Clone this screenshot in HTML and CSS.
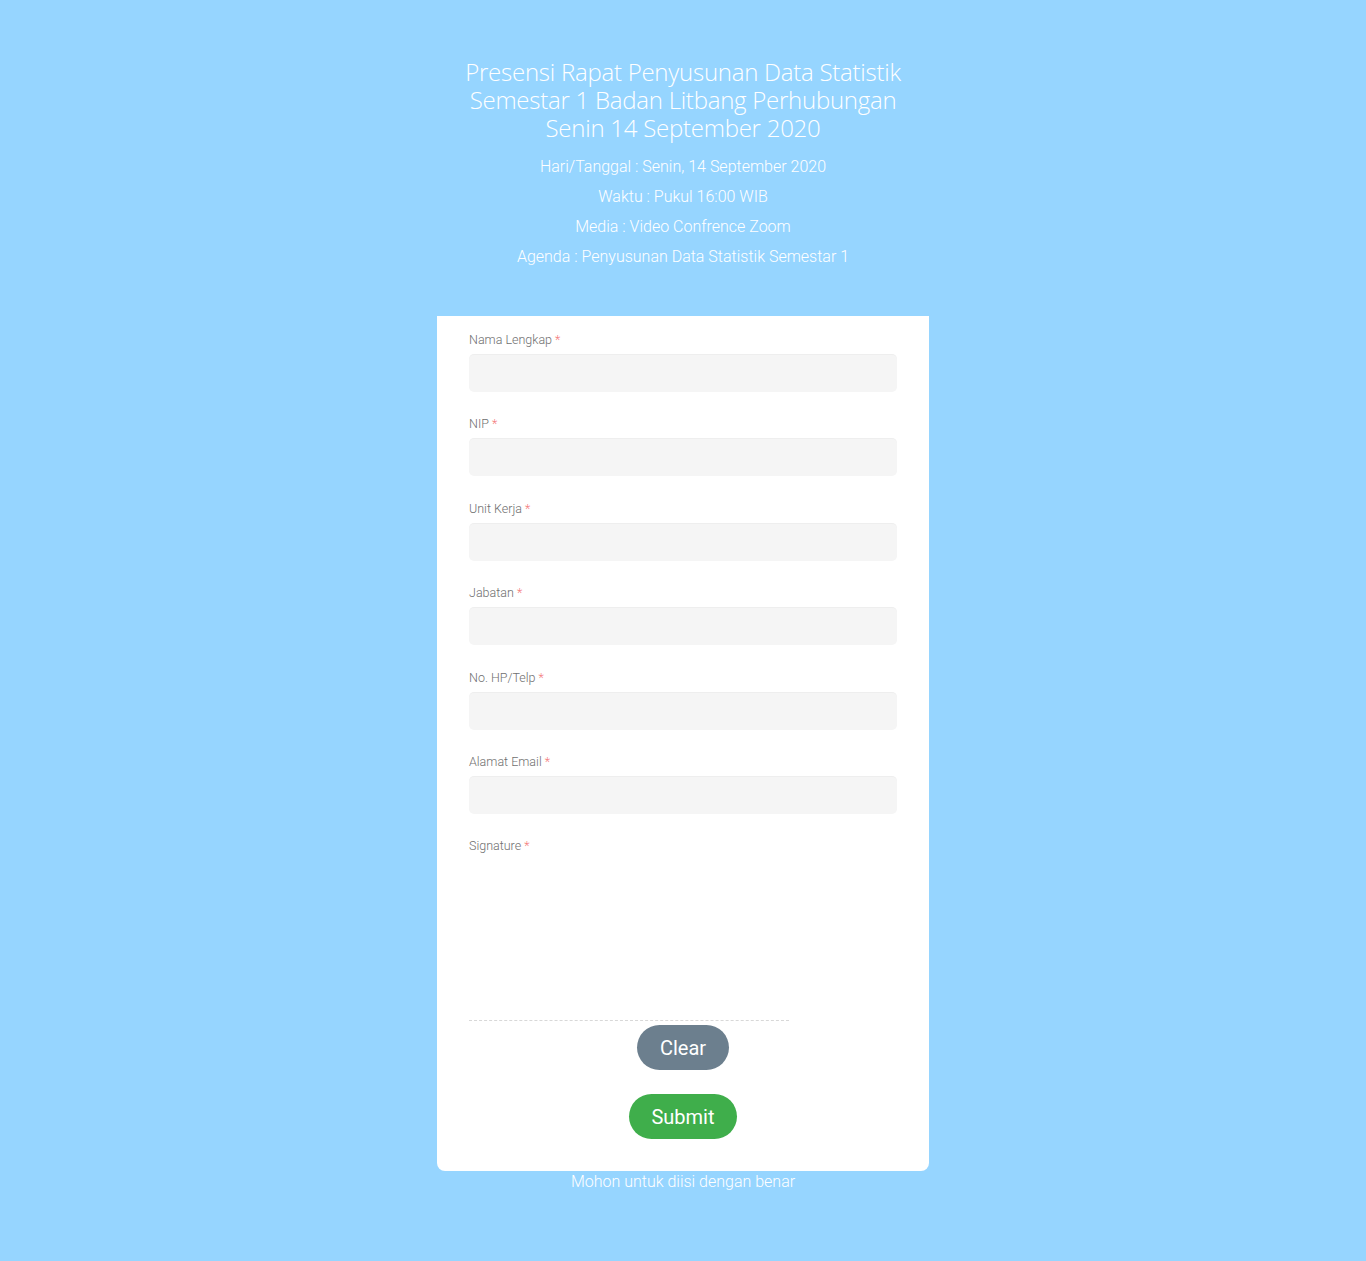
FILE: index.html
```html
<!DOCTYPE html>
<html lang="id">
<head>
<meta charset="utf-8">
<title>Presensi Rapat</title>
<link rel="stylesheet" href="styles.css">
</head>
<body>
<header class="header">
  <h1 class="title">
    <span class="title-line">Presensi Rapat Penyusunan Data Statistik</span>
    <span class="title-line">Semestar 1 Badan Litbang Perhubungan</span>
    <span class="title-line">Senin 14 September 2020</span>
  </h1>
  <p class="info">Hari/Tanggal : Senin, 14 September 2020</p>
  <p class="info">Waktu : Pukul 16:00 WIB</p>
  <p class="info">Media : Video Confrence Zoom</p>
  <p class="info">Agenda : Penyusunan Data Statistik Semestar 1</p>
</header>
<form class="card">
  <div class="field"><label class="label">Nama Lengkap <span class="req">*</span></label><input class="input" type="text"></div>
  <div class="field"><label class="label">NIP <span class="req">*</span></label><input class="input" type="text"></div>
  <div class="field"><label class="label">Unit Kerja <span class="req">*</span></label><input class="input" type="text"></div>
  <div class="field"><label class="label">Jabatan <span class="req">*</span></label><input class="input" type="text"></div>
  <div class="field"><label class="label">No. HP/Telp <span class="req">*</span></label><input class="input" type="text"></div>
  <div class="field"><label class="label">Alamat Email <span class="req">*</span></label><input class="input" type="text"></div>
  <div class="field sig"><label class="label">Signature <span class="req">*</span></label><div class="canvas"></div></div>
  <div class="actions">
    <button type="button" class="btn btn-clear">Clear</button>
    <button type="button" class="btn btn-submit">Submit</button>
  </div>
</form>
<p class="footer">Mohon untuk diisi dengan benar</p>
</body>
</html>
```
FILE: styles.css
```css
html, body {
  margin: 0;
  padding: 0;
}
body {
  background: #96d5ff;
  min-height: 1261px;
  font-family: Roboto, "Liberation Sans", sans-serif;
  color: #fff;
}
.header {
  padding-top: 58px;
  text-align: center;
}
.title {
  margin: 0 0 10px;
  font-family: "Open Sans", "Segoe UI", sans-serif;
  font-weight: 300;
  font-size: 24px;
  line-height: 28px;
  color: #fff;
  letter-spacing: -0.25px;
  display: flex;
  flex-direction: column;
  align-items: center;
}
.title-line {
  display: block;
  height: 28px;
}
.info {
  margin: 0;
  font-size: 16px;
  font-weight: 300;
  line-height: 30px;
}
.card {
  width: 492px;
  box-sizing: border-box;
  margin: 44px auto 0;
  background: #fff;
  border-radius: 0 0 8px 8px;
  padding: 16px 32px 32px;
}
.field {
  display: flex;
  flex-direction: column;
  margin-bottom: 24.4px;
}
.field.sig {
  margin-bottom: 4px;
}
.label {
  font-size: 12.5px;
  font-weight: 300;
  line-height: 16px;
  color: #6f6f6f;
  margin-bottom: 6px;
}
.req {
  color: #f47a7a;
}
.input {
  height: 38px;
  box-sizing: border-box;
  border: none;
  border-top: 1px solid #eeeeee;
  background: #f5f5f5;
  border-radius: 5px;
  width: 100%;
  padding: 0 10px;
  font: inherit;
}
.canvas {
  width: 320px;
  height: 160px;
  border-bottom: 1px dashed #d8d8d8;
}
.actions {
  display: flex;
  flex-direction: column;
  align-items: center;
  gap: 24px;
}
.btn {
  height: 45px;
  padding: 0 23px;
  border: none;
  border-radius: 23px;
  font-family: Roboto, "Liberation Sans", sans-serif;
  font-size: 20px;
  color: #fff;
}
.btn-clear {
  background: #6c7f8e;
}
.btn-submit {
  background: #3fae4b;
  padding: 0 22px;
}
.footer {
  margin: 0;
  text-align: center;
  font-size: 16px;
  font-weight: 300;
  line-height: 22px;
}
```
